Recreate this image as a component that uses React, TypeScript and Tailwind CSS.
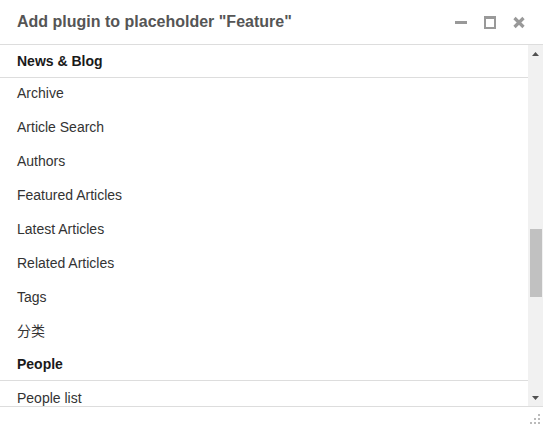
const newsItems = [
  'Archive',
  'Article Search',
  'Authors',
  'Featured Articles',
  'Latest Articles',
  'Related Articles',
  'Tags',
  '分类',
];

const SectionHeader = ({ title }: { title: string }) => (
  <div className="h-[33px] shrink-0 flex items-center px-[17px] border-b border-[#dddddd] font-bold text-[14px] text-[#1a1a1a]">
    {title}
  </div>
);

const Item = ({ label }: { label: string }) => (
  <div className="h-[34px] shrink-0 flex items-center px-[17px] text-[14px] text-[#333333]">
    {label}
  </div>
);

const App = () => {
  return (
    <div className="w-[543px] h-[429px] bg-white flex flex-col overflow-hidden font-['Liberation_Sans','Noto_Sans_CJK_SC',Arial,sans-serif]">
      <div className="h-[45px] shrink-0 flex items-center justify-between pl-[17px] pr-[18px] border-b border-[#dddddd]">
        <h1 className="text-[16px] font-bold text-[#555555]">Add plugin to placeholder "Feature"</h1>
        <div className="flex items-center gap-[17px]">
          <svg width="12" height="13" viewBox="0 0 12 13">
            <rect x="0" y="5" width="12" height="3" fill="#999999" />
          </svg>
          <svg width="12" height="13" viewBox="0 0 12 13">
            <rect x="1" y="1.5" width="10" height="10.5" fill="none" stroke="#999999" strokeWidth="2" />
            <rect x="0" y="0" width="12" height="3" fill="#999999" />
          </svg>
          <svg width="12" height="13" viewBox="0 0 12 13">
            <path d="M1.5 2 L10.5 11 M10.5 2 L1.5 11" stroke="#999999" strokeWidth="3.2" />
          </svg>
        </div>
      </div>

      <div className="flex-1 flex min-h-0">
        <div className="flex-1 flex flex-col overflow-hidden">
          <SectionHeader title="News & Blog" />
          <div className="-mt-[2px] flex flex-col">
            {newsItems.map((item) => (
              <Item key={item} label={item} />
            ))}
            <SectionHeader title="People" />
            <Item label="People list" />
          </div>
        </div>
        <div className="w-[15px] shrink-0 bg-[#f1f1f1] flex flex-col items-center">
          <div className="h-[17px] flex items-center justify-center">
            <svg width="7" height="4" viewBox="0 0 7 4">
              <polygon points="3.5,0 7,4 0,4" fill="#505050" />
            </svg>
          </div>
          <div className="mt-[167px] w-[12px] h-[68px] bg-[#c1c1c1]" />
          <div className="flex-1" />
          <div className="h-[17px] flex items-center justify-center">
            <svg width="7" height="4" viewBox="0 0 7 4">
              <polygon points="0,0 7,0 3.5,4" fill="#505050" />
            </svg>
          </div>
        </div>
      </div>

      <div className="h-[23px] shrink-0 border-t border-[#dddddd] flex justify-end items-end pr-[3px] pb-[5px]">
        <svg width="11" height="11" viewBox="0 0 11 11">
          <rect x="9" y="1" width="2" height="2" fill="#bbbbbb" />
          <rect x="5" y="5" width="2" height="2" fill="#bbbbbb" />
          <rect x="9" y="5" width="2" height="2" fill="#bbbbbb" />
          <rect x="1" y="9" width="2" height="2" fill="#bbbbbb" />
          <rect x="5" y="9" width="2" height="2" fill="#bbbbbb" />
          <rect x="9" y="9" width="2" height="2" fill="#bbbbbb" />
        </svg>
      </div>
    </div>
  );
};

export default App;
